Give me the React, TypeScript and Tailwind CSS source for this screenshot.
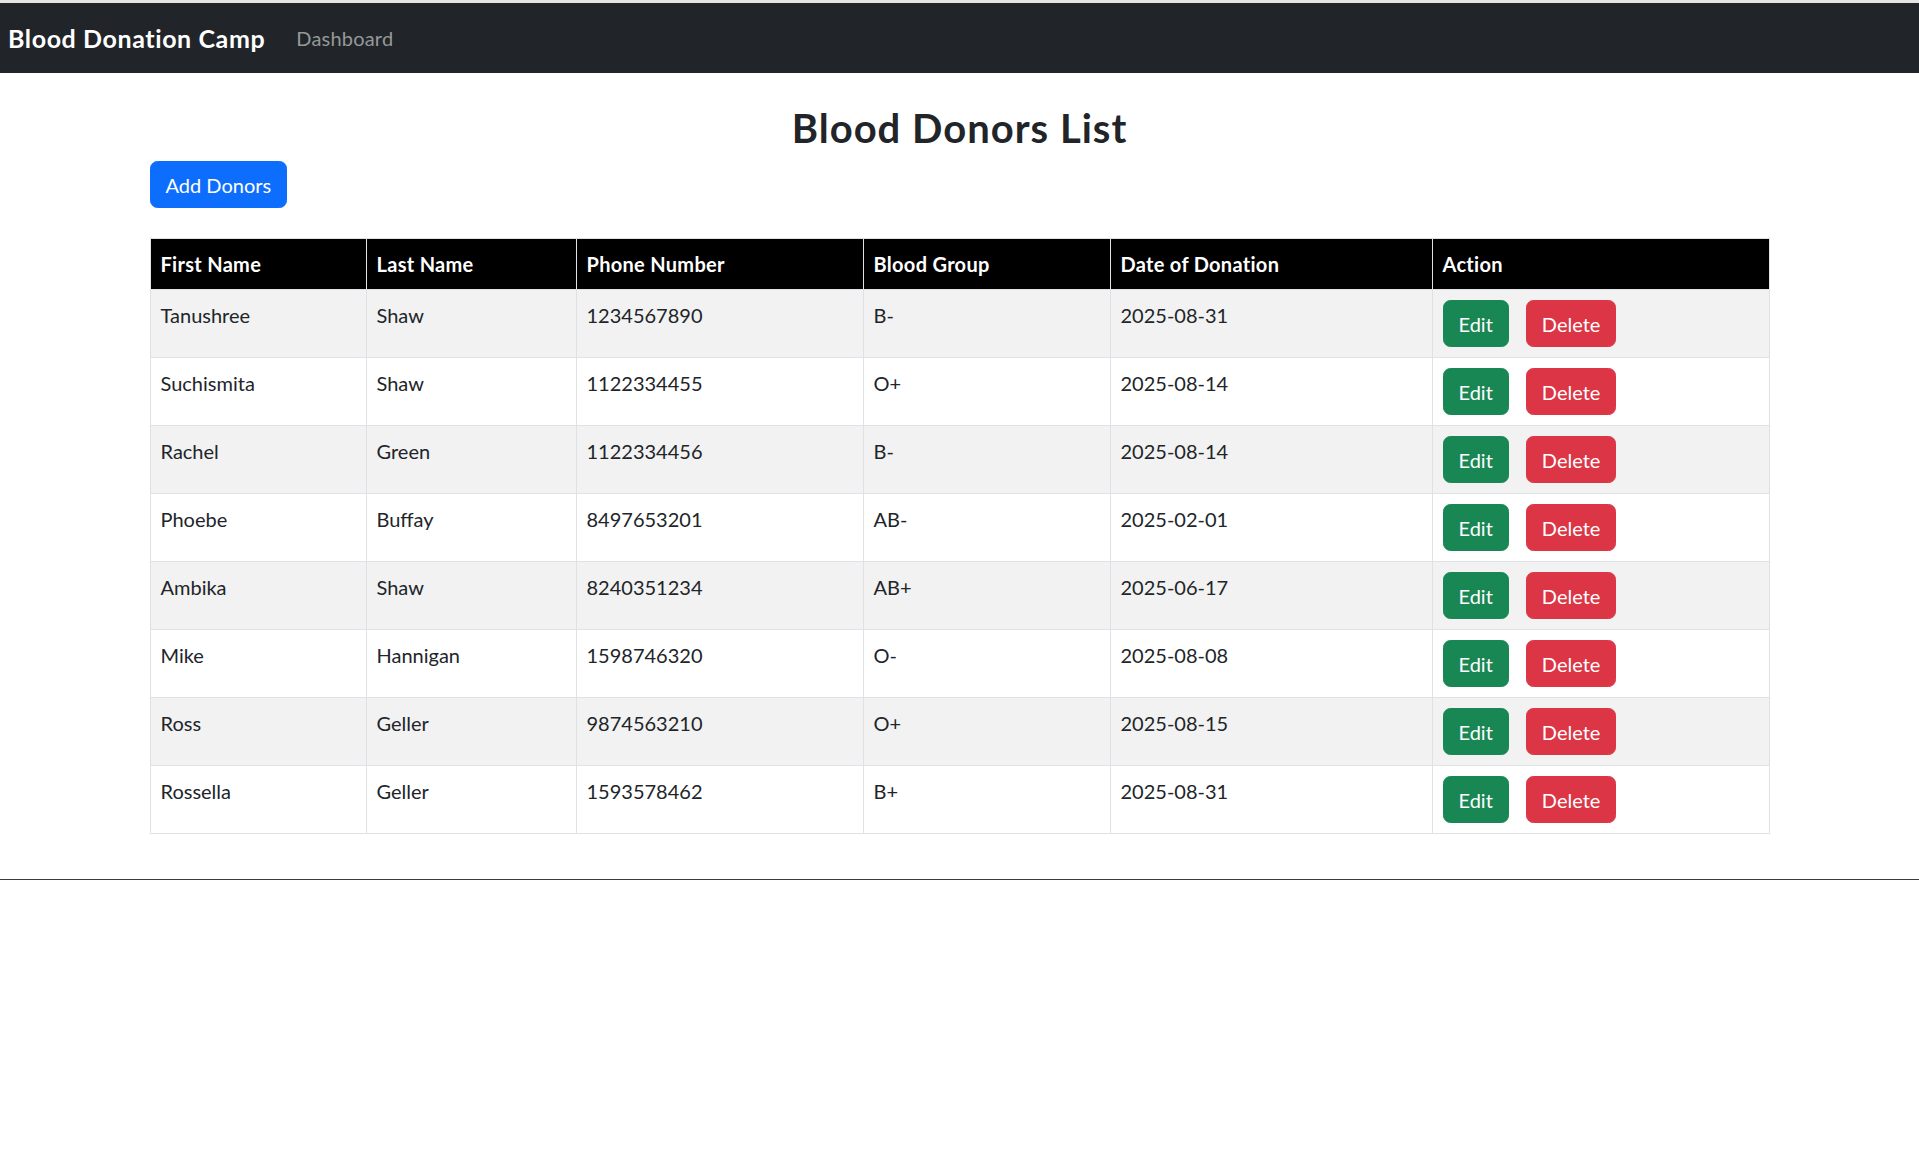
import React from 'react';

type Donor = {
  first: string;
  last: string;
  phone: string;
  group: string;
  date: string;
};

const donors: Donor[] = [
  { first: 'Tanushree', last: 'Shaw', phone: '1234567890', group: 'B-', date: '2025-08-31' },
  { first: 'Suchismita', last: 'Shaw', phone: '1122334455', group: 'O+', date: '2025-08-14' },
  { first: 'Rachel', last: 'Green', phone: '1122334456', group: 'B-', date: '2025-08-14' },
  { first: 'Phoebe', last: 'Buffay', phone: '8497653201', group: 'AB-', date: '2025-02-01' },
  { first: 'Ambika', last: 'Shaw', phone: '8240351234', group: 'AB+', date: '2025-06-17' },
  { first: 'Mike', last: 'Hannigan', phone: '1598746320', group: 'O-', date: '2025-08-08' },
  { first: 'Ross', last: 'Geller', phone: '9874563210', group: 'O+', date: '2025-08-15' },
  { first: 'Rossella', last: 'Geller', phone: '1593578462', group: 'B+', date: '2025-08-31' },
];

const headers = [
  { label: 'First Name', w: 'w-[216px]' },
  { label: 'Last Name', w: 'w-[210px]' },
  { label: 'Phone Number', w: 'w-[287px]' },
  { label: 'Blood Group', w: 'w-[247px]' },
  { label: 'Date of Donation', w: 'w-[322px]' },
  { label: 'Action', w: 'w-[337px]' },
];

function DonorTable() {
  return (
    <table className="w-[1619px] table-fixed border-collapse border border-[#dee2e6] text-[20px] leading-[30px]">
      <thead>
        <tr className="bg-black text-white">
          {headers.map((h) => (
            <th
              key={h.label}
              className={`${h.w} border border-[#dee2e6] px-[10px] py-[10px] text-left font-bold tracking-[0.3px] align-top`}
            >
              {h.label}
            </th>
          ))}
        </tr>
      </thead>
      <tbody>
        {donors.map((d, i) => (
          <tr key={d.phone + i} className={i % 2 === 0 ? 'bg-[#f2f2f2]' : 'bg-white'}>
            <td className="border border-[#dee2e6] px-[10px] py-[10px] align-top">{d.first}</td>
            <td className="border border-[#dee2e6] px-[10px] py-[10px] align-top">{d.last}</td>
            <td className="border border-[#dee2e6] px-[10px] py-[10px] align-top">{d.phone}</td>
            <td className="border border-[#dee2e6] px-[10px] py-[10px] align-top">{d.group}</td>
            <td className="border border-[#dee2e6] px-[10px] py-[10px] align-top">{d.date}</td>
            <td className="border border-[#dee2e6] px-[10px] py-[10px] align-top">
              <div className="flex gap-[17px]">
                <button className="rounded-[7.5px] border border-[#198754] bg-[#198754] px-[15px] py-[7.5px] text-[20px] leading-[30px] text-white">
                  Edit
                </button>
                <button className="rounded-[7.5px] border border-[#dc3545] bg-[#dc3545] px-[15px] py-[7.5px] text-[20px] leading-[30px] text-white">
                  Delete
                </button>
              </div>
            </td>
          </tr>
        ))}
      </tbody>
    </table>
  );
}

export default function App() {
  return (
    <div className="min-h-screen bg-white font-[Lato,'Segoe_UI',sans-serif] text-[#212529]">
      <div className="h-[3px] bg-[#e4e4e4]" />
      <nav className="flex h-[70px] items-center bg-[#212529] px-[8px]">
        <span className="text-[25px] font-bold leading-[38px] tracking-[0.6px] text-white">Blood Donation Camp</span>
        <span className="ml-[31px] text-[20px] leading-[30px] tracking-[0.2px] text-[#96989a]">Dashboard</span>
      </nav>

      <div className="mx-auto w-[1620px]">
        <h2 className="mt-[31px] mb-[9px] text-center text-[40px] font-bold leading-[48px] tracking-[1px]">
          Blood Donors List
        </h2>
        <button className="rounded-[7.5px] border border-[#0d6efd] bg-[#0d6efd] px-[15px] py-[7.5px] text-[20px] leading-[30px] text-white">
          Add Donors
        </button>
        <div className="mt-[30px]">
          <DonorTable />
        </div>
      </div>

      <div className="mt-[45px] h-px bg-[#3a3a3a]" />
    </div>
  );
}
